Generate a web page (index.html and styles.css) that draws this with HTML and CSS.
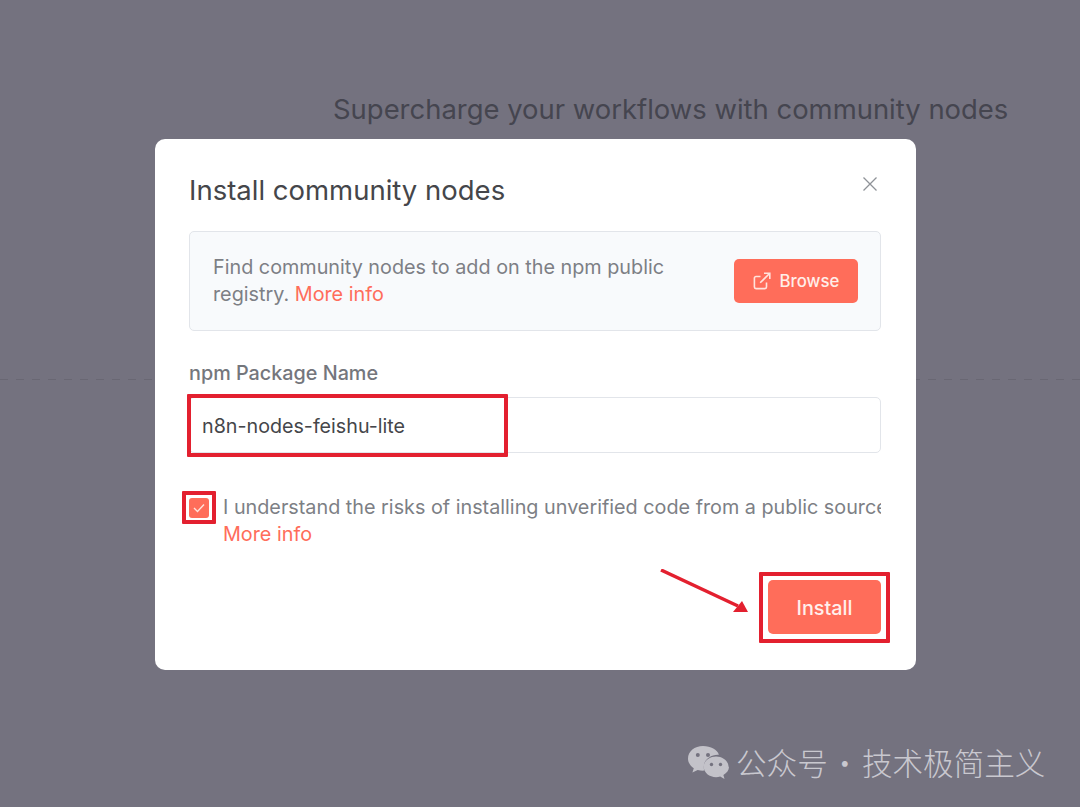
FILE: index.html
```html
<!DOCTYPE html>
<html lang="en">
<head>
    <meta charset="UTF-8">
    <meta name="viewport" content="width=device-width, initial-scale=1.0">
    <title>Install community nodes</title>
    <link rel="stylesheet" href="styles.css">
</head>
<body>
    <div class="backdrop">
        <h2 class="page-title">Supercharge your workflows with community nodes</h2>
        <div class="page-line"></div>
    </div>

    <div class="overlay">
        <div class="modal">
            <div class="modal-head">
                <h1 class="modal-title">Install community nodes</h1>
                <svg class="close-icon" width="16" height="16" viewBox="0 0 16 16">
                    <path d="M1.5 1.5L14.5 14.5M14.5 1.5L1.5 14.5" stroke="#8f9298" stroke-width="1.3" fill="none"/>
                </svg>
            </div>

            <div class="info-box">
                <p class="info-text">Find community nodes to add on the npm public registry. <a class="link">More info</a></p>
                <button class="browse-button">
                    <svg width="18" height="18" viewBox="0 0 18 18" fill="none" stroke="#ffe3dc" stroke-width="1.6">
                        <path d="M13.5 10.5V15a1.6 1.6 0 0 1-1.6 1.6H3A1.6 1.6 0 0 1 1.400 15V6.100A1.600 1.600 0 0 1 3 4.500H7.500"/>
                        <path d="M11 1.200H16.800V7M16.800 1.200L7.200 10.800"/>
                    </svg>
                    Browse
                </button>
            </div>

            <label class="field-label">npm Package Name</label>
            <div class="field">
                <div class="text-input">n8n-nodes-feishu-lite</div>
                <div class="mark mark-input"></div>
            </div>

            <div class="check-row">
                <span class="checkbox">
                    <svg width="12" height="10" viewBox="0 0 12 10" fill="none" stroke="#ffe3dc" stroke-width="1.400">
                        <path d="M1 5L4.500 8.500L11 1.500"/>
                    </svg>
                </span>
                <div class="check-text">
                    <span class="check-line">I understand the risks of installing unverified code from a public source</span>
                    <a class="link">More info</a>
                </div>
                <div class="mark mark-check"></div>
            </div>

            <div class="modal-foot">
                <svg class="arrow" width="92" height="46" viewBox="0 0 92 46">
                    <path d="M1 1L78 37" stroke="#e3202f" stroke-width="3.500" fill="none"/>
                    <path d="M88 43L73 43L82 32Z" fill="#e3202f"/>
                </svg>
                <div class="install-wrap">
                    <button class="install-button">Install</button>
                    <div class="mark mark-install"></div>
                </div>
            </div>
        </div>
    </div>

    <div class="watermark">
        <svg width="42" height="34" viewBox="0 0 42 34" fill="#c3c2c9">
            <path d="M16 1C7.700 1 1 6.500 1 13.400c0 4 2.300 7.500 5.800 9.800L5.400 27.600l5.300-2.700c1.700.5 3.400.8 5.300.8.500 0 1 0 1.400-.1-.4-1.200-.6-2.400-.6-3.700 0-6.800 6.300-12.200 14-12.200h1.100C30.400 4.600 23.800 1 16 1z"/>
            <path d="M41.500 21.800c0-5.800-5.600-10.400-12.400-10.400s-12.400 4.600-12.400 10.400 5.600 10.400 12.400 10.400c1.400 0 2.800-.2 4.100-.6l4.300 2.300-1.100-3.800c3.400-2 5.600-5 5.600-8.300z"/>
            <circle cx="10.800" cy="10" r="2" fill="#74727f"/>
            <circle cx="21" cy="10" r="2" fill="#74727f"/>
            <circle cx="24.500" cy="19.500" r="1.700" fill="#74727f"/>
            <circle cx="33.500" cy="19.500" r="1.700" fill="#74727f"/>
        </svg>
        <span class="watermark-text">公众号 · 技术极简主义</span>
    </div>
</body>
</html>
```

FILE: styles.css
```css
/* Global Styles */
* {
    box-sizing: border-box;
}

body {
    font-family: 'Inter', sans-serif;
    background-color: #74727f;
    margin: 0;
    width: 1080px;
    height: 807px;
    overflow: hidden;
    position: relative;
}

/* Page behind the overlay */
.backdrop {
    position: absolute;
    inset: 0;
}

.page-title {
    margin: 0;
    padding: 93px 0 0 333px;
    font-size: 27.450px;
    line-height: 32px;
    font-weight: 400;
    color: #45454f;
    white-space: nowrap;
}

.page-line {
    height: 1px;
    margin-top: 254px;
    background-image: repeating-linear-gradient(to right, #696773 0 8px, transparent 8px 16px);
}

/* Modal */
.overlay {
    position: relative;
    padding: 139px 0 0 155px;
}

.modal {
    width: 761px;
    height: 531px;
    background-color: white;
    border-radius: 10px;
    padding: 31px 35px 0 34px;
}

.modal-head {
    display: flex;
    justify-content: space-between;
    align-items: flex-start;
    height: 61px;
}

.modal-title {
    margin: 0;
    font-size: 27.500px;
    line-height: 40px;
    font-weight: 400;
    color: #45464a;
}

.close-icon {
    margin: 6px 3px 0 0;
}

.info-box {
    display: flex;
    align-items: center;
    justify-content: space-between;
    height: 100px;
    padding: 0 22px 0 23px;
    background-color: #f8fafc;
    border: 1px solid #e2e5ea;
    border-radius: 5px;
}

.info-text {
    margin: 0;
    width: 490px;
    font-size: 19.800px;
    line-height: 27px;
    color: #7d7f85;
}

.link {
    color: #ff6d5a;
}

.browse-button {
    display: flex;
    align-items: center;
    justify-content: center;
    gap: 9px;
    width: 124px;
    height: 44px;
    background-color: #ff6d5a;
    color: #ffeee9;
    border: none;
    border-radius: 5px;
    font-family: inherit;
    font-size: 16.800px;
    font-weight: 500;
}

.field-label {
    display: block;
    margin-top: 29px;
    font-size: 19.800px;
    line-height: 26px;
    font-weight: 500;
    color: #74767c;
}

.field {
    position: relative;
    margin-top: 11px;
}

.text-input {
    height: 56px;
    padding-left: 12px;
    border: 1px solid #e2e5ea;
    border-radius: 5px;
    font-size: 19.700px;
    line-height: 56px;
    color: #45464a;
}

.check-row {
    position: relative;
    display: flex;
    margin-top: 40px;
    height: 54px;
}

.checkbox {
    flex: none;
    display: flex;
    align-items: center;
    justify-content: center;
    width: 20px;
    height: 20px;
    margin: 5px 14px 0 0;
    background-color: #ff6d5a;
    border-radius: 3px;
}

.check-text {
    min-width: 0;
    padding-top: 1px;
    font-size: 19.800px;
    line-height: 27px;
    color: #7d7f85;
}

.check-line {
    display: block;
    white-space: nowrap;
    overflow: hidden;
}

.modal-foot {
    position: relative;
    display: flex;
    justify-content: flex-end;
    margin-top: 33px;
}

.install-wrap {
    position: relative;
}

.install-button {
    display: block;
    width: 113px;
    height: 54px;
    padding-top: 2px;
    background-color: #ff6d5a;
    color: #fff0ec;
    border: none;
    border-radius: 5px;
    font-family: inherit;
    font-size: 19.800px;
    font-weight: 500;
}

.arrow {
    position: absolute;
    left: 471px;
    top: -11px;
}

/* Red annotation boxes drawn over the controls */
.mark {
    position: absolute;
    border: 4px solid #e3202f;
    border-radius: 1px;
}

.mark-input {
    left: -2px;
    top: -3px;
    width: 321px;
    height: 63px;
}

.mark-check {
    left: -7px;
    top: -2px;
    width: 34px;
    height: 33px;
}

.mark-install {
    left: -9px;
    top: -8px;
    width: 131px;
    height: 71px;
}

/* Watermark */
.watermark {
    position: absolute;
    left: 687px;
    top: 740px;
    display: flex;
    align-items: center;
    gap: 7px;
    font-family: 'Noto Sans CJK SC', sans-serif;
    font-size: 30.600px;
    line-height: 44px;
    font-weight: 300;
    color: #c9c8cf;
    white-space: nowrap;
}

.watermark-text {
    word-spacing: -5px;
}
```
